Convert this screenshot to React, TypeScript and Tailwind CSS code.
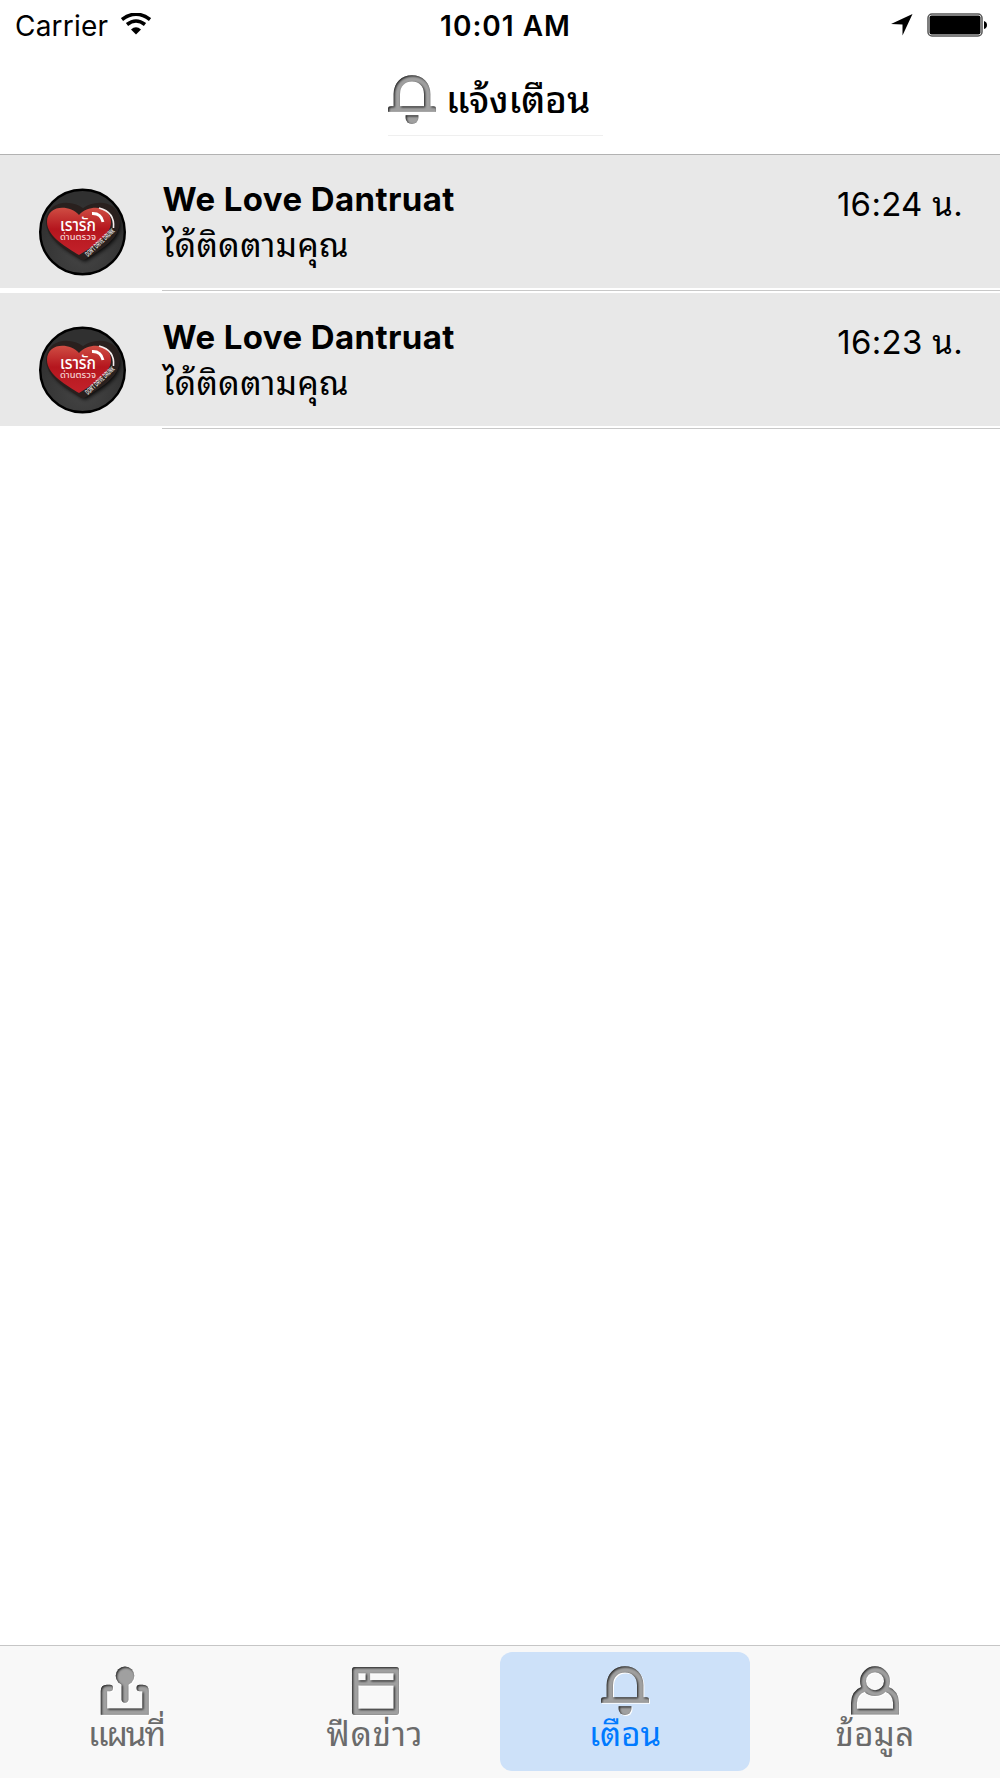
import type { ReactNode } from "react";

interface Notification {
  id: number;
  name: string;
  message: string;
  time: string;
}

const NOTIFICATIONS: Notification[] = [
  { id: 1, name: "We Love Dantruat", message: "ได้ติดตามคุณ", time: "16:24" },
  { id: 2, name: "We Love Dantruat", message: "ได้ติดตามคุณ", time: "16:23" },
];

// Wraps glyph shapes with the embossed grey look shared by all icons
function EmbossedIcon({ id, children }: { id: string; children: ReactNode }) {
  return (
    <svg width="49" height="49" viewBox="0 0 50 50" className="block shrink-0 overflow-visible">
      <defs>
        <filter id={id} x="-10%" y="-10%" width="125%" height="125%" colorInterpolationFilters="sRGB">
          <feOffset in="SourceAlpha" dx="1" dy="1" result="off" />
          <feGaussianBlur in="off" stdDeviation="0.9" result="soft" />
          <feComposite in="SourceAlpha" in2="soft" operator="out" result="edge" />
          <feFlood floodColor="#1c1c1c" />
          <feComposite in2="edge" operator="in" result="dark" />
          <feGaussianBlur in="off" stdDeviation="0.6" result="lit" />
          <feFlood floodColor="#ffffff" />
          <feComposite in2="lit" operator="in" result="light" />
          <feMerge>
            <feMergeNode in="light" />
            <feMergeNode in="SourceGraphic" />
            <feMergeNode in="dark" />
          </feMerge>
        </filter>
      </defs>
      <g filter={`url(#${id})`}>{children}</g>
    </svg>
  );
}

function BellIcon({ id }: { id: string }) {
  return (
    <EmbossedIcon id={id}>
      <path d="M9 33V19.5C9 9.5 16 3.5 24.5 3.5S40 9.5 40 19.5V33" fill="none" stroke="#a0a0a0" strokeWidth="6.5" />
      <path d="M0 37.5V34.5Q0 32 3 32H46Q49 32 49 34.5V37.5Z" fill="#a0a0a0" />
      <path d="M18 41H31V44A6.5 6 0 0 1 18 44Z" fill="#a0a0a0" />
    </EmbossedIcon>
  );
}

function MapIcon() {
  return (
    <EmbossedIcon id="map">
      <path d="M9 22.5H6Q3 22.5 3 25.5V46.5H45.5V25.5Q45.5 22.5 42.5 22.5H39.5" fill="none" stroke="#a0a0a0" strokeWidth="6.5" strokeLinecap="round" />
      <circle cx="24.5" cy="10" r="9.5" fill="#a0a0a0" />
      <path d="M24.5 12V34" stroke="#a0a0a0" strokeWidth="7" strokeLinecap="round" />
    </EmbossedIcon>
  );
}

function FeedIcon() {
  return (
    <EmbossedIcon id="feed">
      <path
        fill="#a0a0a0"
        fillRule="evenodd"
        d="M4 1H46Q49 1 49 4V47Q49 50 46 50H4Q1 50 1 47V4Q1 1 4 1ZM7.5 7.5V14.5H15V7.5ZM19.5 7.5V14.5H43.5V7.5ZM7.5 20V43.5H43.5V20Z"
      />
    </EmbossedIcon>
  );
}

function PersonIcon() {
  return (
    <EmbossedIcon id="person">
      <g fill="none" stroke="#a0a0a0" strokeWidth="6">
        <circle cx="24.5" cy="15.5" r="12.2" />
        <path d="M13 23.5C6.5 26 3 31 3 38V46.5H46V38C46 31 42.5 26 36 23.5" />
      </g>
    </EmbossedIcon>
  );
}

function Avatar({ id }: { id: number }) {
  const heart = "M41 67C30 60 9 49 9 34C9 17 31 16 41 27C51 16 73 17 73 34C73 49 52 60 41 67Z";
  return (
    <svg width="88" height="88" viewBox="0 0 88 88" className="block shrink-0 overflow-visible">
      <defs>
        <radialGradient id={`disc${id}`} cx="50%" cy="75%" r="60%">
          <stop offset="0" stopColor="#454545" />
          <stop offset="1" stopColor="#303030" />
        </radialGradient>
        <linearGradient id={`heart${id}`} x1="0" y1="0" x2="0" y2="1">
          <stop offset="0" stopColor="#cf4d43" />
          <stop offset="0.45" stopColor="#b5161e" />
          <stop offset="1" stopColor="#c3222b" />
        </linearGradient>
        <filter id={`shade${id}`} x="-20%" y="-20%" width="140%" height="140%">
          <feGaussianBlur stdDeviation="2" />
        </filter>
      </defs>
      <circle cx="44.5" cy="44" r="42.3" fill={`url(#disc${id})`} stroke="#000" strokeWidth="2.4" />
      <path d={heart} transform="translate(6 3)" fill="#000" stroke="#000" strokeWidth="6" filter={`url(#shade${id})`} />
      <path d={heart} transform="translate(4 0)" fill="#29201e" stroke="#29201e" strokeWidth="10" strokeLinejoin="round" />
      <path d={heart} fill={`url(#heart${id})`} />
      <path d="M54 25.5Q63 25 65 34" fill="none" stroke="#fff" strokeWidth="2.8" />
      <path d="M61 20Q77 24 75.5 40" fill="none" stroke="#f5eeee" strokeWidth="1.6" />
      <g className="font-['Noto_Sans_Thai','Inter',sans-serif]">
        <text x="22" y="43" textLength="36" lengthAdjust="spacingAndGlyphs" fontSize="17" fontWeight="500" fill="#fff">เรารัก</text>
        <text x="22" y="52" textLength="36" lengthAdjust="spacingAndGlyphs" fontSize="9.5" fontWeight="500" fill="#f3cfcf">ด่านตรวจ</text>
      </g>
      <text transform="translate(50 69) rotate(-43)" textLength="37" lengthAdjust="spacingAndGlyphs" fontSize="7.5" fontWeight="700" fill="#e8e8e8" className="font-['Liberation_Sans',sans-serif]">DON'T DRIVE DRUNK</text>
    </svg>
  );
}

function StatusBar() {
  return (
    <div className="grid h-[51px] grid-cols-3 items-center pr-[13px] pl-[15px] text-[28px] leading-none">
      <div className="flex items-center gap-[13px]">
        <span className="tracking-[0.2px]">Carrier</span>
        <svg width="30" height="22" viewBox="0 0 30 22" fill="none" stroke="#000" className="-mt-[3px]">
          <path d="M1 6.5Q15 -4 29 6.5" strokeWidth="3.6" />
          <path d="M6 11.5Q15 4.5 24 11.5" strokeWidth="3.6" />
          <path d="M10 16.5Q15 12 20 16.5L15 21.5Z" fill="#000" stroke="none" />
        </svg>
      </div>
      <span className="justify-self-center pl-[9px] font-semibold tracking-[1px] whitespace-nowrap">10:01 AM</span>
      <div className="-mt-[2px] flex items-center gap-[14px] justify-self-end">
        <svg width="22" height="22" viewBox="0 0 22 22">
          <path d="M0 10L21.5 0L11.5 21.5V10.5Z" />
        </svg>
        <svg width="60" height="24" viewBox="0 0 60 24">
          <rect x="1" y="1" width="54" height="22" rx="4" fill="#fff" stroke="#555" strokeWidth="1.5" />
          <rect x="2.5" y="2.5" width="51" height="19" rx="2" />
          <path d="M57 8Q60 9 60 12T57 16Z" />
        </svg>
      </div>
    </div>
  );
}

function NotificationRow({ item }: { item: Notification }) {
  return (
    <li>
      <div className="flex h-[133px] bg-[#e8e8e8] pr-[37px] pl-[38px]">
        <div className="pt-[33px]">
          <Avatar id={item.id} />
        </div>
        <div className="grow pt-[24px] pl-[36.5px]">
          <p className="h-[42px] text-[33px] leading-[40px] font-bold tracking-[0.4px]">{item.name}</p>
          <p className="h-[48px] text-[33.5px] leading-[48px] tracking-[0.4px]">{item.message}</p>
        </div>
        <p className="pt-[29px] text-[33px] leading-[40px] tracking-[0.3px] whitespace-nowrap">{item.time} น.</p>
      </div>
      <div className="flex h-[5.3px] flex-col justify-center pl-[162px]">
        <div className="h-px bg-[#c8c8c8]" />
      </div>
    </li>
  );
}

interface TabProps {
  label: string;
  labelClass?: string;
  active?: boolean;
  children: ReactNode;
}

function Tab({ label, labelClass = "", active, children }: TabProps) {
  return (
    <button
      type="button"
      className={`flex h-[119px] w-1/4 flex-col items-center rounded-[12px] pt-[14px] ${
        active ? "bg-[#cde1f9] text-[#007aff]" : "text-[#6b6b6b]"
      }`}
    >
      {children}
      <span className={`text-[33px] leading-[39px] ${labelClass}`}>{label}</span>
    </button>
  );
}

export default function App() {
  return (
    <div className="flex h-[1778px] w-[1000px] flex-col bg-white font-['Inter','Noto_Sans_Thai_Looped','Noto_Looped_Thai','Thonburi','Loma','Waree','Garuda','Noto_Sans_Thai',sans-serif] text-black">
      <header className="h-[155px] shrink-0 border-b border-[#b2b2b2]">
        <StatusBar />
        <div className="ml-[388px] flex h-[85px] w-[215px] items-start gap-[9px] border-b border-[#efefef] pt-[24px]">
          <BellIcon id="bell-title" />
          <h1 className="text-[37px] leading-[50px] font-medium tracking-[-0.1px] whitespace-nowrap">แจ้งเตือน</h1>
        </div>
      </header>
      <ul className="grow">
        {NOTIFICATIONS.map(item => (
          <NotificationRow key={item.id} item={item} />
        ))}
      </ul>
      <nav className="flex h-[133px] shrink-0 border-t border-[#c6c6c6] bg-[#f8f8f8] pt-[6px]">
        <Tab label="แผนที่" labelClass="-mr-[2px] tracking-[-2px]"><MapIcon /></Tab>
        <Tab label="ฟีดข่าว" labelClass="tracking-[1px]"><FeedIcon /></Tab>
        <Tab label="เตือน" active><BellIcon id="bell-tab" /></Tab>
        <Tab label="ข้อมูล" labelClass="tracking-[0.4px]"><PersonIcon /></Tab>
      </nav>
    </div>
  );
}
